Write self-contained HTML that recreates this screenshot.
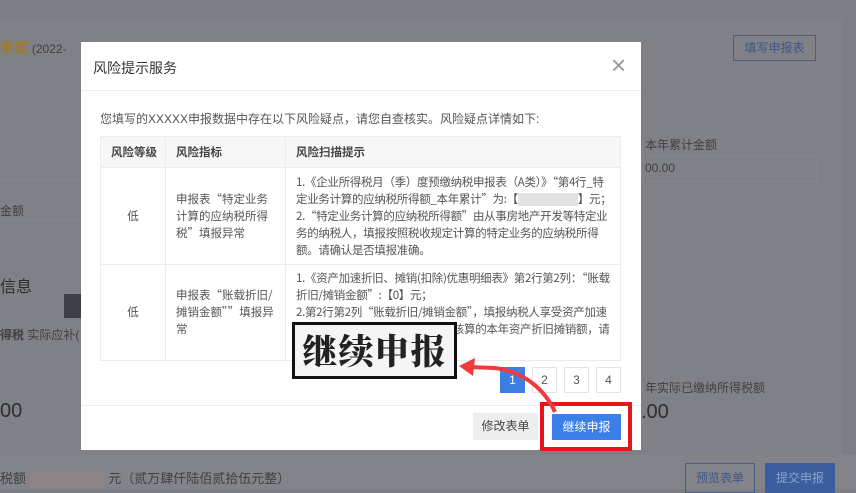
<!DOCTYPE html>
<html><head><meta charset="utf-8"><style>
*{margin:0;padding:0;box-sizing:border-box}
body{width:856px;height:489px;overflow:hidden;background:#7d7e83;font-family:"Liberation Sans","Noto Sans CJK SC",sans-serif;position:relative;color:#333}
.a{position:absolute}
.bg{color:#3f4044;font-size:12px}
.modal{position:absolute;left:81px;top:42px;width:560px;height:408px;background:#fff}
.t{font-size:12px;color:#555}
table{position:absolute;left:19px;top:94px;width:521px;border-collapse:collapse;font-size:11.5px;color:#555;line-height:17px;font-family:"Noto Sans CJK SC",sans-serif}
td,th{border:1px solid #ececec;vertical-align:middle}
th{background:#f7f7f7;text-align:left;font-weight:bold;color:#444;height:31px;padding-left:10px}
td{padding:0 10px}
td.w{padding:0 8px 0 10px;letter-spacing:-0.3px}
.pg{position:absolute;top:325px;width:25px;height:26px;border:1px solid #e4e4e4;font-size:12px;text-align:center;line-height:24px;color:#555;background:#fff}
</style></head><body>
<div class="a" style="left:0;top:18px;width:842px;height:437px;background:#808186"></div>
<div class="a" style="left:0;top:38px;font-size:14px;color:#a07a2a;font-weight:bold">季度 <span style="color:#3f4044;font-weight:normal;font-size:12px">(2022-</span></div>
<div class="a" style="left:733px;top:35px;width:83px;height:26px;border:1px solid #4a5f86;color:#3e5686;font-size:12px;text-align:center;line-height:24px">填写申报表</div>
<div class="a bg" style="left:645px;top:136px">本年累计金额</div>
<div class="a" style="left:641px;top:155px;width:176px;height:27px;border:1px solid #85868b"></div>
<div class="a bg" style="left:645px;top:161px">00.00</div>
<div class="a bg" style="left:0;top:202px">金额</div>
<div class="a" style="left:0;top:180px;width:81px;height:1px;background:#86878c"></div>
<div class="a" style="left:0;top:220px;width:81px;height:1px;background:#86878c"></div>
<div class="a" style="left:0;top:273px;font-size:16px;color:#2d2e32">信息</div>
<div class="a" style="left:64px;top:294px;width:17px;height:24px;background:#3e3f44"></div>
<div class="a bg" style="left:0;top:326px"><b>得税</b> 实际应补(</div>
<div class="a" style="left:0;top:400px;font-size:20px;color:#2d2e32">00</div>
<div class="a bg" style="left:645px;top:379px">年实际已缴纳所得税额</div>
<div class="a" style="left:641px;top:401px;font-size:20px;color:#2d2e32">.00</div>
<div class="a" style="left:0;top:455px;width:856px;height:34px;background:#838489"></div>
<div class="a" style="left:0;top:468px;font-size:13px;color:#3f4044">税额 <span style="display:inline-block;width:75px;height:16px;background:#8e8488;vertical-align:middle"></span> 元（贰万肆仟陆佰贰拾伍元整）</div>
<div class="a" style="left:685px;top:463px;width:70px;height:30px;border:1px solid #4a5f86;color:#3e5686;font-size:12px;text-align:center;line-height:28px">预览表单</div>
<div class="a" style="left:765px;top:463px;width:70px;height:30px;background:#3a5e9e;color:#8ea3c9;font-size:12px;text-align:center;line-height:30px">提交申报</div>

<div class="modal">
<div class="a" style="left:12px;top:16px;font-size:14px;color:#333">风险提示服务</div>
<div class="a" style="left:530px;top:8px;font-size:26px;color:#999">×</div>
<div class="a" style="left:0;top:48px;width:560px;height:1px;background:#eee"></div>
<div class="a t" style="left:19px;top:68px">您填写的XXXXX申报数据中存在以下风险疑点，请您自查核实。风险疑点详情如下:</div>
<table>
<tr><th style="width:65px">风险等级</th><th style="width:120px">风险指标</th><th>风险扫描提示</th></tr>
<tr style="height:97px"><td style="text-align:center">低</td><td>申报表“特定业务计算的应纳税所得税”填报异常</td><td class="w">1.《企业所得税月（季）度预缴纳税申报表（A类）》“第4行_特定业务计算的应纳税所得额_本年累计”为:【<span style="display:inline-block;width:60px;height:13px;background:#e2e2e2;vertical-align:middle"></span>】元；<br>2.“特定业务计算的应纳税所得额”由从事房地产开发等特定业务的纳税人，填报按照税收规定计算的特定业务的应纳税所得额。请确认是否填报准确。</td></tr>
<tr style="height:96px"><td style="text-align:center">低</td><td>申报表“账载折旧/摊销金额””填报异常</td><td class="w">1.《资产加速折旧、摊销(扣除)优惠明细表》第2行第2列：“账载折旧/摊销金额”:【0】元；<br>2.第2行第2列“账载折旧/摊销金额”，填报纳税人享受资产加速折旧摊销优惠政策的资产，会计核算的本年资产折旧摊销额，请核实。</td></tr>
</table>
<div class="pg" style="left:419px;background:#3d7fe0;border-color:#3d7fe0;color:#fff">1</div>
<div class="pg" style="left:451px">2</div>
<div class="pg" style="left:483px">3</div>
<div class="pg" style="left:515px">4</div>
<div class="a" style="left:0;top:363px;width:560px;height:1px;background:#eee"></div>
<div class="a" style="left:392px;top:371px;width:65px;height:27px;background:#eee;font-size:12px;text-align:center;line-height:27px;color:#444">修改表单</div>
<div class="a" style="left:471px;top:372px;width:69px;height:26px;background:#3d7fe8;font-size:12px;text-align:center;line-height:26px;color:#fff">继续申报</div>
</div>
<div class="a" style="left:540px;top:402px;width:92px;height:49px;border:4px solid #e8141c"></div>
<div class="a" style="left:292px;top:322px;width:165px;height:57px;border:3px solid #111;background:#f5f5f5;font-family:'Noto Serif CJK SC',serif;font-weight:900;font-size:35px;line-height:50px;text-align:center;color:#222;letter-spacing:1px">继续申报</div>
<svg class="a" style="left:455px;top:350px" width="110" height="70"><path d="M100 62 C90 40 70 22 40 18 L14 17" stroke="#ef3b3b" stroke-width="4" fill="none"/><path d="M4 16 L20 8 L18 26 Z" fill="#ef3b3b"/></svg>
</body></html>
